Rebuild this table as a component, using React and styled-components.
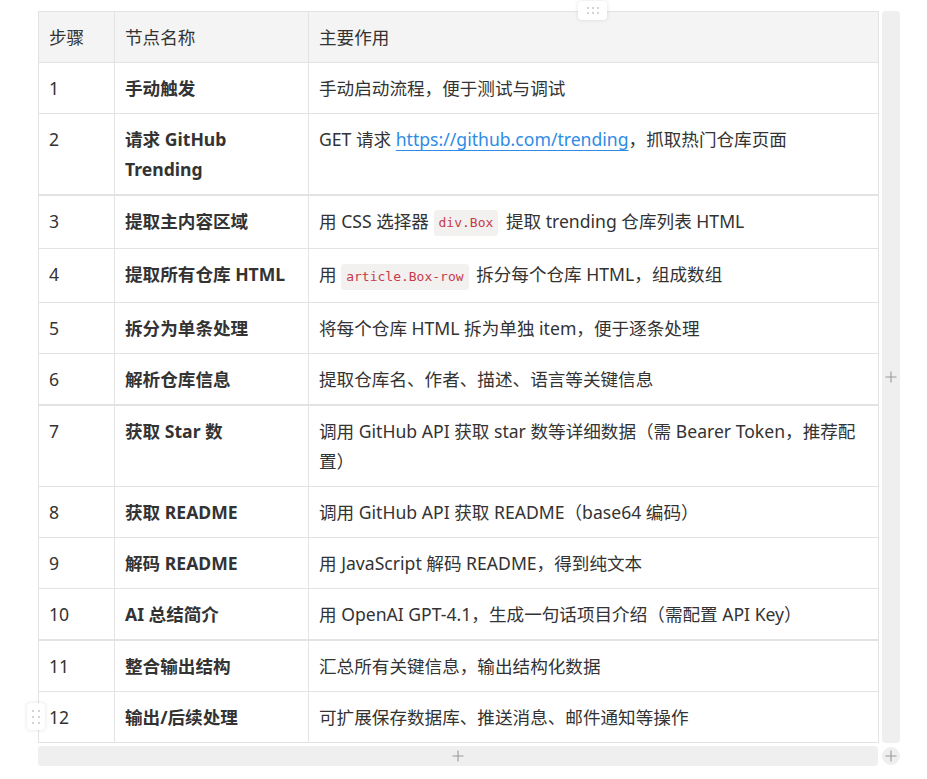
import React from 'react';
import styled, { createGlobalStyle } from 'styled-components';

const GlobalStyle = createGlobalStyle`
  html, body {
    margin: 0;
    padding: 0;
    background: #ffffff;
  }
  body {
    font-family: "Noto Sans", "Noto Sans CJK SC", sans-serif;
    color: #333333;
  }
`;

const Page = styled.div`
  padding: 11px 0 0 38px;
`;

const Editor = styled.div`
  position: relative;
  display: grid;
  grid-template-columns: 840px 18px;
  grid-template-rows: auto 20px;
  column-gap: 4px;
  row-gap: 3px;
  width: 862px;
`;

const Table = styled.table`
  border-collapse: collapse;
  table-layout: fixed;
  width: 840px;
  font-size: 17.6px;
  line-height: 30px;
`;

const HeadCell = styled.th`
  box-sizing: border-box;
  background: #f4f4f4;
  border: 1px solid #e3e3e3;
  padding: 10px 10px;
  text-align: left;
  font-weight: 400;
  width: ${({ $w }) => $w}px;
`;

const Row = styled.tr`
  td {
    border-top-width: ${({ $thick }) => ($thick ? '2px' : '1px')};
  }
`;

const Cell = styled.td`
  border: 1px solid #e3e3e3;
  padding: 10px 10px;
  vertical-align: top;
  font-weight: ${({ $bold }) => ($bold ? 700 : 400)};
`;

const Link = styled.a`
  color: #2e8be6;
  text-decoration: underline;
  text-underline-offset: 4px;
  text-decoration-thickness: 1px;
`;

const Code = styled.code`
  display: inline-block;
  font-family: "DejaVu Sans Mono", "Liberation Mono", monospace;
  font-size: 13px;
  line-height: 20px;
  color: #c73a4b;
  background: #f2f1ef;
  border-radius: 3px;
  padding: 3px 5px;
  margin: 2px 3px 2px 0;
  vertical-align: middle;
`;

const SideBar = styled.div`
  background: #efefef;
  border-radius: 4px;
  display: flex;
  align-items: center;
  justify-content: center;
`;

const BottomBar = styled(SideBar)``;

const CornerButton = styled.div`
  background: #efefef;
  border-radius: 50%;
  width: 18px;
  height: 18px;
  display: flex;
  align-items: center;
  justify-content: center;
  align-self: center;
`;

const Handle = styled.div`
  position: absolute;
  background: #ffffff;
  border-radius: 4px;
  box-shadow: 0 0 4px rgba(0, 0, 0, 0.12);
  display: grid;
  align-content: center;
  justify-content: center;
`;

const TopHandle = styled(Handle)`
  left: 540px;
  top: -10px;
  width: 29px;
  height: 19px;
  grid-template-columns: repeat(3, 2px);
  gap: 3px 3px;
`;

const LeftHandle = styled(Handle)`
  left: -11px;
  top: 692px;
  width: 18px;
  height: 27px;
  grid-template-columns: repeat(2, 2px);
  gap: 4px 4px;
`;

const Dot = styled.span`
  width: 2px;
  height: 2px;
  border-radius: 1px;
  background: #c4c4c4;
`;

const Plus = ({ size = 12, color = '#9a9a9a' }) => (
  <svg width={size} height={size} viewBox="0 0 12 12">
    <path d="M6 0.5v11M0.5 6h11" stroke={color} strokeWidth="1.1" fill="none" />
  </svg>
);

const steps = [
  { n: '1', name: '手动触发', desc: '手动启动流程，便于测试与调试' },
  {
    n: '2',
    name: '请求 GitHub Trending',
    desc: (
      <>
        GET 请求 <Link href="#">https://github.com/trending</Link>，抓取热门仓库页面
      </>
    ),
  },
  {
    n: '3',
    name: '提取主内容区域',
    thick: true,
    desc: (
      <>
        用 CSS 选择器 <Code>div.Box</Code> 提取 trending 仓库列表 HTML
      </>
    ),
  },
  {
    n: '4',
    name: '提取所有仓库 HTML',
    desc: (
      <>
        用 <Code>article.Box-row</Code> 拆分每个仓库 HTML，组成数组
      </>
    ),
  },
  { n: '5', name: '拆分为单条处理', desc: '将每个仓库 HTML 拆为单独 item，便于逐条处理' },
  { n: '6', name: '解析仓库信息', desc: '提取仓库名、作者、描述、语言等关键信息' },
  {
    n: '7',
    name: '获取 Star 数',
    thick: true,
    desc: '调用 GitHub API 获取 star 数等详细数据（需 Bearer Token，推荐配置）',
  },
  { n: '8', name: '获取 README', desc: '调用 GitHub API 获取 README（base64 编码）' },
  { n: '9', name: '解码 README', desc: '用 JavaScript 解码 README，得到纯文本' },
  { n: '10', name: 'AI 总结简介', desc: '用 OpenAI GPT-4.1，生成一句话项目介绍（需配置 API Key）' },
  { n: '11', name: '整合输出结构', thick: true, desc: '汇总所有关键信息，输出结构化数据' },
  { n: '12', name: '输出/后续处理', desc: '可扩展保存数据库、推送消息、邮件通知等操作' },
];

const App = () => (
  <>
    <GlobalStyle />
    <Page>
      <Editor>
        <Table>
          <thead>
            <tr>
              <HeadCell $w={76}>步骤</HeadCell>
              <HeadCell $w={194}>节点名称</HeadCell>
              <HeadCell $w={570}>主要作用</HeadCell>
            </tr>
          </thead>
          <tbody>
            {steps.map((s) => (
              <Row key={s.n} $thick={s.thick}>
                <Cell>{s.n}</Cell>
                <Cell $bold>{s.name}</Cell>
                <Cell>{s.desc}</Cell>
              </Row>
            ))}
          </tbody>
        </Table>
        <SideBar>
          <Plus />
        </SideBar>
        <BottomBar>
          <Plus />
        </BottomBar>
        <CornerButton>
          <Plus />
        </CornerButton>
        <TopHandle>
          {Array.from({ length: 6 }).map((_, i) => (
            <Dot key={i} />
          ))}
        </TopHandle>
        <LeftHandle>
          {Array.from({ length: 6 }).map((_, i) => (
            <Dot key={i} />
          ))}
        </LeftHandle>
      </Editor>
    </Page>
  </>
);

export default App;
